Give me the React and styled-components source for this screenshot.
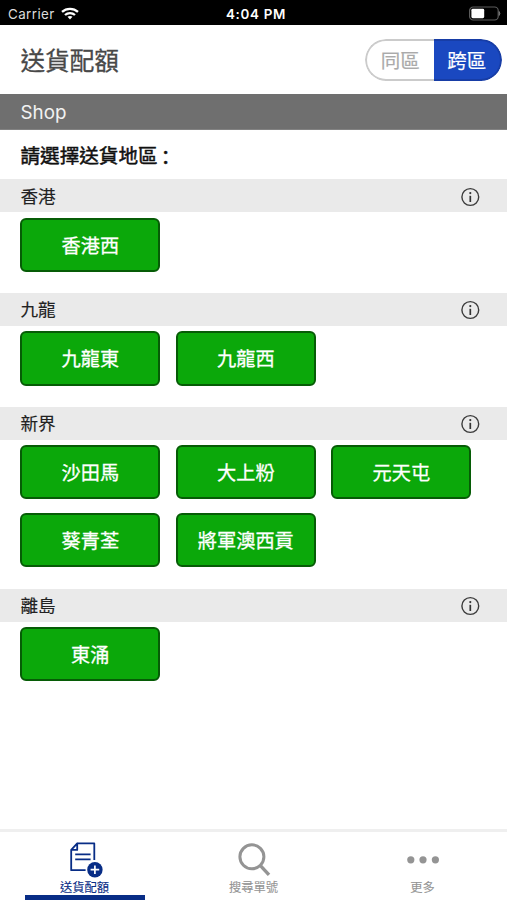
import React, { useState } from 'react';
import styled, { createGlobalStyle } from 'styled-components';

const GlobalStyle = createGlobalStyle`
    * {
        box-sizing: border-box;
    }

    body {
        margin: 0;
        background-color: #fff;
        font-family: Inter, 'Noto Sans CJK TC', sans-serif;
    }

    button {
        font-family: inherit;
        padding: 0;
        cursor: pointer;
    }
`;

const Screen = styled.div`
    width: 100%;
    height: 100vh;
    display: flex;
    flex-direction: column;
    overflow: hidden;
`;

const StatusBar = styled.div`
    height: 25px;
    flex: none;
    padding: 2px 6px 0 8px;
    display: grid;
    grid-template-columns: 1fr auto 1fr;
    align-items: center;
    background-color: #000;
    color: #fff;
    font-size: 13px;
    line-height: 20px;
`;

const Carrier = styled.div`
    display: flex;
    align-items: center;
    gap: 6px;
    color: #dcdcdc;
    font-size: 13.4px;
    letter-spacing: 0.4px;

    svg {
        margin-top: -1px;
    }
`;

const Clock = styled.div`
    padding-left: 3px;
    font-weight: 600;
    font-size: 13.4px;
    letter-spacing: 0.7px;
`;

const BatteryWrapper = styled.div`
    display: flex;
    justify-content: flex-end;
`;

const Header = styled.header`
    height: 69px;
    flex: none;
    padding: 0 5px 0 20.5px;
    display: flex;
    align-items: center;
    justify-content: space-between;
`;

const PageTitle = styled.h1`
    margin: 0;
    padding-top: 3px;
    font-size: 24.6px;
    font-weight: 400;
    line-height: 36px;
    color: #484848;
    -webkit-text-stroke: 0.3px #484848;
`;

const Segments = styled.div`
    display: flex;
    width: 137px;
    height: 42px;
    border-radius: 21px;
    overflow: hidden;
`;

const Segment = styled.button`
    flex: 1;
    border: 2px solid ${props => props.$active ? '#173da6' : '#cbcbcb'};
    border-radius: ${props => props.$last ? '0 21px 21px 0' : '21px 0 0 21px'};
    border-${props => props.$last ? 'left' : 'right'}-width: 0;
    background-color: ${props => props.$active ? '#1a48c0' : '#fff'};
    color: ${props => props.$active ? '#fff' : '#aaa'};
    font-size: 19.5px;
    line-height: 28px;
    padding-top: 3px;
    -webkit-text-stroke: 0.2px;
`;

const ShopBar = styled.div`
    height: 36px;
    flex: none;
    padding: 2px 20.5px 0;
    display: flex;
    align-items: center;
    background-color: #6f6f6f;
    border-bottom: 1px solid #828282;
    color: #f2f2f2;
    font-size: 18.8px;
    line-height: 36px;
`;

const Content = styled.main`
    flex: 1;
    min-height: 0;
`;

const Prompt = styled.div`
    height: 49.3px;
    padding: 3px 20.5px 0;
    display: flex;
    align-items: center;
    font-size: 19.6px;
    line-height: 30px;
    color: #111;
    -webkit-text-stroke: 0.5px #111;
`;

const Colon = styled.span`
    margin-left: 3px;
    font-family: 'Noto Sans CJK SC', sans-serif;
`;

const RegionHeader = styled.div`
    height: 33px;
    padding: 0 27px 0 20.5px;
    display: flex;
    align-items: center;
    justify-content: space-between;
    background-color: #eaeaea;
    color: #222;
    font-size: 17.6px;
    line-height: 26px;
    -webkit-text-stroke: 0.15px #222;

    svg {
        margin-top: 1.5px;
    }
`;

const RegionName = styled.span`
    padding-top: 2px;
`;

const DistrictGrid = styled.div`
    padding: 5.3px 20.3px 21.1px;
    display: grid;
    grid-template-columns: repeat(3, 140px);
    gap: 13.9px 15.5px;
`;

const District = styled.button`
    height: 54.3px;
    padding-top: 2px;
    border: 2px solid #065c06;
    border-radius: 6px;
    background-color: #0ba80a;
    color: #fff;
    font-size: 19.2px;
    line-height: 28px;
    -webkit-text-stroke: 0.3px #fff;
`;

const TabBar = styled.nav`
    height: 71px;
    flex: none;
    display: grid;
    grid-template-columns: repeat(3, 1fr);
    border-top: 3px solid #efefef;
`;

const Tab = styled.button`
    border: 0;
    background: none;
    display: flex;
    flex-direction: column;
    align-items: center;
    padding-top: 10px;
    color: ${props => props.$active ? '#082d86' : '#949494'};
`;

const TabIcon = styled.div`
    height: 37px;

    svg {
        overflow: visible;
    }
`;

const TabLabel = styled.div`
    font-size: 12.3px;
    line-height: 18px;
    -webkit-text-stroke: 0.1px;
`;

const TabIndicator = styled.div`
    width: 120px;
    height: 5px;
    margin-top: -2px;
    background-color: ${props => props.$active ? '#082d86' : 'transparent'};
`;

const WifiIcon = () => (
    <svg width="18" height="13" viewBox="0 0 18 13" fill="none" stroke="#fff" strokeWidth="2.3">
        <path d="M1 4.9C5.5.8 12.5.8 17 4.9" />
        <path d="M4 8C6.8 5.4 11.2 5.4 14 8" />
        <path d="M6.5 9.8C7.9 8.6 10.1 8.6 11.5 9.8L9 12.4Z" fill="#fff" stroke="none" />
    </svg>
);

const BatteryIcon = () => (
    <svg width="33" height="15" viewBox="0 0 33 15">
        <rect x="1.6" y="1" width="28.6" height="13" rx="3.6" fill="none" stroke="#5c5c5c" strokeWidth="1.2" />
        <rect x="3.4" y="2.8" width="12.8" height="9.4" rx="1.4" fill="#fff" />
        <path d="M31.2 5.6Q32.6 7.5 31.2 9.4Z" fill="#777" stroke="#777" />
    </svg>
);

const InfoIcon = () => (
    <svg width="20" height="20" viewBox="0 0 20 20">
        <circle cx="10.3" cy="10" r="8.4" fill="none" stroke="#3b3b3b" strokeWidth="1.4" />
        <circle cx="10.3" cy="6.1" r="1.1" fill="#333" />
        <path d="M10.3 8.8V15" stroke="#333" strokeWidth="1.7" />
    </svg>
);

const OrderIcon = () => (
    <svg width="34" height="37" viewBox="0 0 34 37" fill="none" stroke="#082d86" strokeWidth="1.8">
        <path d="M9.2 1.4H26.3V18M17.6 28.2H3.2V7.9L9.2 1.4V7.9H3.2" strokeLinejoin="round" />
        <path d="M7.2 12.3H22.6M7.2 17.3H22.6" />
        <circle cx="26.9" cy="27.7" r="7.7" fill="#082d86" stroke="none" />
        <path d="M26.9 23.4V32M22.6 27.7H31.2" stroke="#fff" strokeWidth="1.7" />
    </svg>
);

const SearchIcon = () => (
    <svg width="34" height="37" viewBox="0 0 34 37" fill="none" stroke="#949494">
        <circle cx="14.9" cy="14.8" r="12" strokeWidth="3" />
        <path d="M23.2 23.4L32 32.8" strokeWidth="3.4" />
    </svg>
);

const MoreIcon = () => (
    <svg width="34" height="37" viewBox="0 0 34 37" fill="#949494">
        <circle cx="4.8" cy="17.8" r="3.6" />
        <circle cx="17" cy="17.8" r="3.6" />
        <circle cx="29.4" cy="17.8" r="3.6" />
    </svg>
);

const regions = [
    { name: '香港', districts: ['香港西'] },
    { name: '九龍', districts: ['九龍東', '九龍西'] },
    { name: '新界', districts: ['沙田馬', '大上粉', '元天屯', '葵青荃', '將軍澳西貢'] },
    { name: '離島', districts: ['東涌'] },
];

const tabs = [
    { label: '送貨配額', Icon: OrderIcon },
    { label: '搜尋單號', Icon: SearchIcon },
    { label: '更多', Icon: MoreIcon },
];

const Region = ({ name, districts }) => (
    <section>
        <RegionHeader>
            <RegionName>{name}</RegionName>
            <InfoIcon />
        </RegionHeader>
        <DistrictGrid>
            {districts.map(district => (
                <District key={district}>{district}</District>
            ))}
        </DistrictGrid>
    </section>
);

const App = () => {
    const [crossDistrict, setCrossDistrict] = useState(true);
    const [activeTab, setActiveTab] = useState(0);

    return (
        <Screen>
            <GlobalStyle />
            <StatusBar>
                <Carrier>
                    Carrier
                    <WifiIcon />
                </Carrier>
                <Clock>4:04 PM</Clock>
                <BatteryWrapper>
                    <BatteryIcon />
                </BatteryWrapper>
            </StatusBar>
            <Header>
                <PageTitle>送貨配額</PageTitle>
                <Segments>
                    <Segment $active={!crossDistrict} onClick={() => setCrossDistrict(false)}>同區</Segment>
                    <Segment $last $active={crossDistrict} onClick={() => setCrossDistrict(true)}>跨區</Segment>
                </Segments>
            </Header>
            <ShopBar>Shop</ShopBar>
            <Content>
                <Prompt>
                    請選擇送貨地區<Colon lang="zh-Hans">：</Colon>
                </Prompt>
                {regions.map(region => (
                    <Region key={region.name} {...region} />
                ))}
            </Content>
            <TabBar>
                {tabs.map(({ label, Icon }, index) => (
                    <Tab key={label} $active={index === activeTab} onClick={() => setActiveTab(index)}>
                        <TabIcon><Icon /></TabIcon>
                        <TabLabel>{label}</TabLabel>
                        <TabIndicator $active={index === activeTab} />
                    </Tab>
                ))}
            </TabBar>
        </Screen>
    );
};

export default App;
